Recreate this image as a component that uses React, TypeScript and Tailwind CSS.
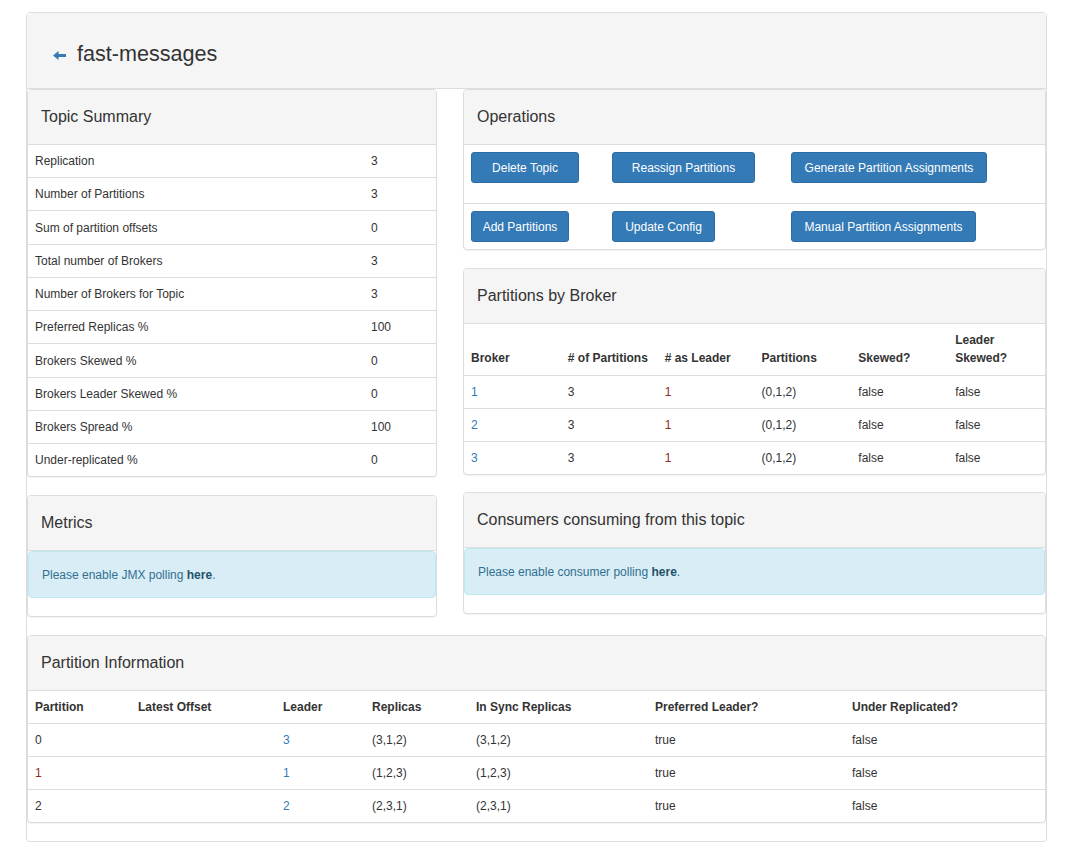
import React from "react";

const Panel = ({ title, className = "", children }: { title: string; className?: string; children?: React.ReactNode }) => (
  <div className={`border border-[#ddd] rounded-[4px] bg-white shadow-[0_1px_1px_rgba(0,0,0,0.05)] overflow-hidden ${className}`}>
    <div className="h-[55px] bg-[#f5f5f5] border-b border-[#ddd] flex items-center pl-[13px] text-[16px] text-[#333]">{title}</div>
    {children}
  </div>
);

const Btn = ({ label, w }: { label: string; w: string }) => (
  <div className={`${w} h-[31px] bg-[#337ab7] border border-[#2e6da4] rounded-[3px] text-white text-[12px] flex items-center justify-center`}>{label}</div>
);

const Alert = ({ text }: { text: string }) => (
  <div className="h-[47px] mb-[18px] bg-[#d9edf7] border border-[#bce8f1] rounded-[4px] text-[#31708f] flex items-center pl-[13px] text-[12px]">
    <span>
      {text} <b className="text-[#245269]">here</b>.
    </span>
  </div>
);

const summary: [string, string][] = [
  ["Replication", "3"],
  ["Number of Partitions", "3"],
  ["Sum of partition offsets", "0"],
  ["Total number of Brokers", "3"],
  ["Number of Brokers for Topic", "3"],
  ["Preferred Replicas %", "100"],
  ["Brokers Skewed %", "0"],
  ["Brokers Leader Skewed %", "0"],
  ["Brokers Spread %", "100"],
  ["Under-replicated %", "0"],
];

const RED = "text-[#8e2b22]";

export default function App() {
  return (
    <div className="min-h-[857px] bg-white pt-[12px] pl-[26px] font-['Liberation_Sans',Arial,sans-serif] text-[12px] text-[#333]">
      <div className="w-[1021px] border border-[#ddd] rounded-[4px] bg-white">
        <div className="h-[76px] bg-[#f5f5f5] border-b border-[#ddd] flex items-center pl-[26px] pt-[8px]">
          <svg width="13" height="9" viewBox="0 0 13 9" className="mt-[1px]">
            <polygon points="0,4.5 5.5,0 5.5,9" fill="#337ab7" />
            <rect x="5" y="3" width="8" height="3" fill="#337ab7" />
          </svg>
          <span className="ml-[11px] text-[21.6px] text-[#333]">fast-messages</span>
        </div>
        <div className="pb-[18px]">
          <div className="flex gap-[26px]">
            <div className="w-[410px]">
              <Panel title="Topic Summary">
                {summary.map(([k, v], i) => (
                  <div
                    key={k}
                    className={`grid grid-cols-[336px_1fr] items-center ${i === 0 ? "h-[32.2px]" : "h-[33.25px] border-t border-[#ddd]"}`}
                  >
                    <div className="pl-[7px]">{k}</div>
                    <div className="pl-[7px]">{v}</div>
                  </div>
                ))}
              </Panel>
              <Panel title="Metrics" className="mt-[18px]">
                <Alert text="Please enable JMX polling" />
              </Panel>
            </div>
            <div className="w-[583px]">
              <Panel title="Operations">
                <div className="h-[59px] border-b border-[#ddd] grid grid-cols-[141px_179px_1fr] pt-[7px] pl-[7px]">
                  <Btn label="Delete Topic" w="w-[108px]" />
                  <Btn label="Reassign Partitions" w="w-[143px]" />
                  <Btn label="Generate Partition Assignments" w="w-[196px]" />
                </div>
                <div className="h-[45px] grid grid-cols-[141px_179px_1fr] pt-[7px] pl-[7px]">
                  <Btn label="Add Partitions" w="w-[98px]" />
                  <Btn label="Update Config" w="w-[103px]" />
                  <Btn label="Manual Partition Assignments" w="w-[185px]" />
                </div>
              </Panel>
              <Panel title="Partitions by Broker" className="mt-[18px]">
                <div className="h-[51px] grid grid-cols-6 items-end pb-[8px] font-bold leading-[18px]">
                  <div className="pl-[7px]">Broker</div>
                  <div className="pl-[7px]"># of Partitions</div>
                  <div className="pl-[7px]"># as Leader</div>
                  <div className="pl-[7px]">Partitions</div>
                  <div className="pl-[7px]">Skewed?</div>
                  <div className="pl-[7px]">
                    Leader
                    <br />
                    Skewed?
                  </div>
                </div>
                {["1", "2", "3"].map((b) => (
                  <div key={b} className="h-[33px] border-t border-[#ddd] grid grid-cols-6 items-center">
                    <div className="pl-[7px] text-[#337ab7]">{b}</div>
                    <div className="pl-[7px]">3</div>
                    <div className={`pl-[7px] ${RED}`}>1</div>
                    <div className="pl-[7px]">(0,1,2)</div>
                    <div className="pl-[7px]">false</div>
                    <div className="pl-[7px]">false</div>
                  </div>
                ))}
              </Panel>
              <Panel title="Consumers consuming from this topic" className="mt-[17px]">
                <Alert text="Please enable consumer polling" />
              </Panel>
            </div>
          </div>
          <Panel title="Partition Information" className="mt-[18px] w-[1019px]">
            <div className="h-[32px] grid grid-cols-[103px_145px_89px_104px_179px_197px_1fr] items-center font-bold">
              <div className="pl-[7px]">Partition</div>
              <div className="pl-[7px]">Latest Offset</div>
              <div className="pl-[7px]">Leader</div>
              <div className="pl-[7px]">Replicas</div>
              <div className="pl-[7px]">In Sync Replicas</div>
              <div className="pl-[7px]">Preferred Leader?</div>
              <div className="pl-[7px]">Under Replicated?</div>
            </div>
            {[
              ["0", "3", "(3,1,2)"],
              ["1", "1", "(1,2,3)"],
              ["2", "2", "(2,3,1)"],
            ].map(([p, l, r]) => (
              <div key={p} className="h-[33px] border-t border-[#ddd] grid grid-cols-[103px_145px_89px_104px_179px_197px_1fr] items-center">
                <div className={`pl-[7px] ${p === "1" ? RED : ""}`}>{p}</div>
                <div className="pl-[7px]"></div>
                <div className="pl-[7px] text-[#337ab7]">{l}</div>
                <div className="pl-[7px]">{r}</div>
                <div className="pl-[7px]">{r}</div>
                <div className="pl-[7px]">true</div>
                <div className="pl-[7px]">false</div>
              </div>
            ))}
          </Panel>
        </div>
      </div>
    </div>
  );
}
